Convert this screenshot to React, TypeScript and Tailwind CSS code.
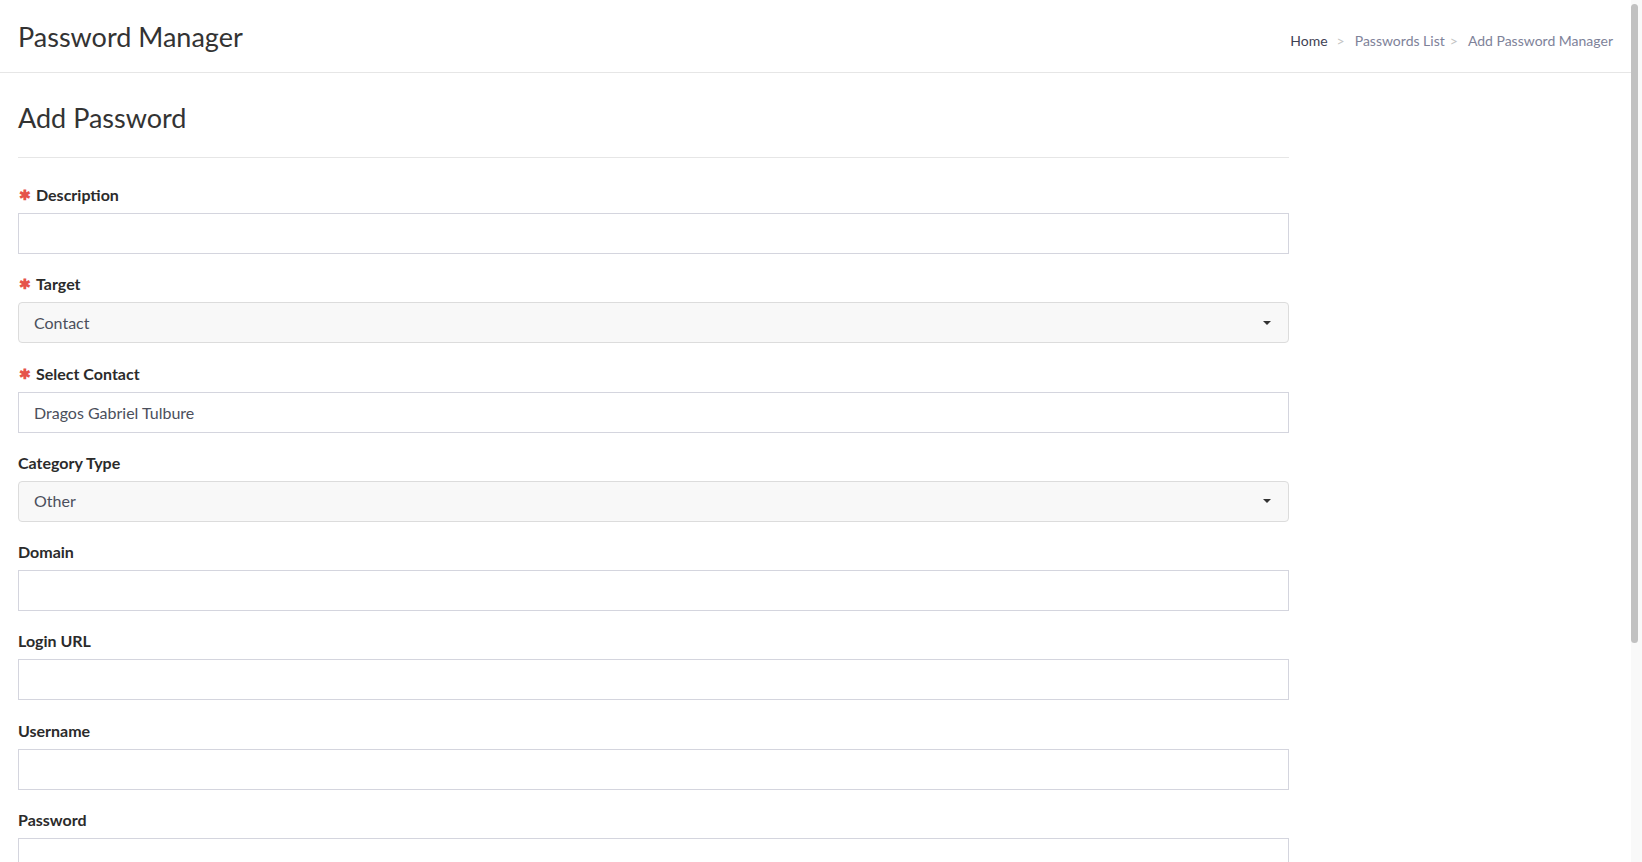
const font = { fontFamily: '"Source Sans Pro", Lato, "Noto Sans", sans-serif' };

function Label({ text, required }: { text: string; required?: boolean }) {
  return (
    <label className="flex items-center h-6 text-[16px] font-bold text-[#2b2b2b]">
      {required && <span className="text-[#e5534b] text-[14px] mr-[5px] ml-[1px] leading-none">✱</span>}
      {text}
    </label>
  );
}

function TextField({ label, required, value }: { label: string; required?: boolean; value?: string }) {
  return (
    <div className="mb-[18.25px]">
      <Label text={label} required={required} />
      <input
        defaultValue={value}
        className="mt-[6px] block w-full h-[41px] border border-[#d4d5de] bg-white px-[15px] text-[16px] text-[#4b4f5c] outline-none"
      />
    </div>
  );
}

function SelectField({ label, required, value }: { label: string; required?: boolean; value: string }) {
  return (
    <div className="mb-[18.25px]">
      <Label text={label} required={required} />
      <div className="mt-[6px] flex items-center justify-between h-[41px] border border-[#dcdcdc] rounded-[4px] bg-[#f8f8f8] px-[15px] text-[16px] text-[#4b4f5c]">
        <span>{value}</span>
        <svg width="10" height="6" viewBox="0 0 10 6" className="mr-[1px]"><path d="M1 1h8L5 5z" fill="#333" /></svg>
      </div>
    </div>
  );
}

export default function App() {
  return (
    <div className="flex h-screen overflow-hidden bg-white" style={font}>
      <div className="flex-1 min-w-0 overflow-hidden">
        <header className="flex items-center justify-between h-[73px] border-b border-[#e6e6e6] pl-[18px] pr-[18px]">
          <h1 className="text-[27px] leading-9 text-[#333] mt-[1px]">Password Manager</h1>
          <nav className="flex items-center text-[14px] mt-[8px]">
            <span className="text-[#3f4254]">Home</span>
            <span className="text-[#c4c4c4] pl-[9px] pr-[10px]">&gt;</span>
            <span className="text-[#7e8299]">Passwords List</span>
            <span className="text-[#c4c4c4] pl-[5px] pr-[10px]">&gt;</span>
            <span className="text-[#7e8299]">Add Password Manager</span>
          </nav>
        </header>

        <main className="pl-[18px]">
          <div className="w-[1271px]">
            <h2 className="mt-[27px] text-[27px] leading-9 text-[#333]">Add Password</h2>
            <hr className="mt-[21px] border-t border-[#e6e6e6]" />
            <div className="mt-[25px]">
              <TextField label="Description" required />
              <SelectField label="Target" required value="Contact" />
              <TextField label="Select Contact" required value="Dragos Gabriel Tulbure" />
              <SelectField label="Category Type" value="Other" />
              <TextField label="Domain" />
              <TextField label="Login URL" />
              <TextField label="Username" />
              <TextField label="Password" />
            </div>
          </div>
        </main>
      </div>

      {/* page scrollbar */}
      <div className="w-[11px] shrink-0 bg-[#f9f9f9] pt-[4px]">
        <div className="w-[7px] h-[639px] rounded-full bg-[#c1c1c1]" />
      </div>
    </div>
  );
}
